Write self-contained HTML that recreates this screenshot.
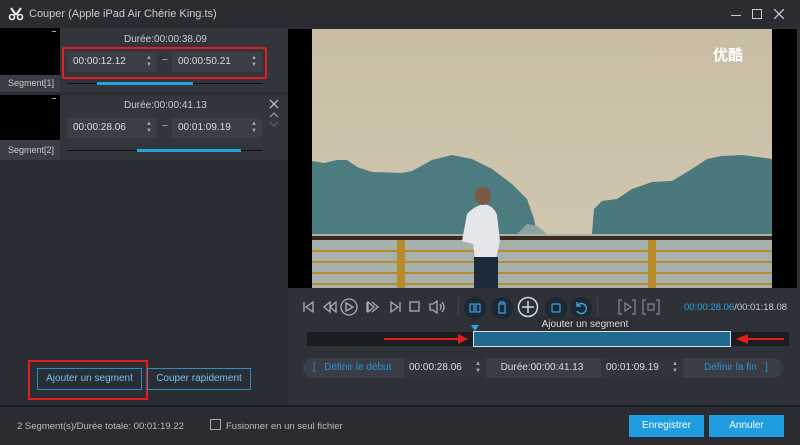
<!DOCTYPE html>
<html><head><meta charset="utf-8"><style>
*{margin:0;padding:0;box-sizing:border-box}
body{width:800px;height:445px;overflow:hidden;background:#2b2e34;font-family:"Liberation Sans","Noto Sans CJK SC",sans-serif;color:#ccc;font-size:10px;position:relative}
.a{position:absolute}
.tf{position:absolute;background:#3b3e45;height:20px;border-radius:2px;color:#ddd;font-size:10px;line-height:20px;padding-left:6px}
.sp{position:absolute;right:5px;top:3px;font-size:6px;line-height:7px;color:#aaa}
.cb{position:absolute;width:22px;height:22px;border-radius:50%;background:#1d2835}
</style></head><body>
<div class="a" style="left:0;top:0;width:800px;height:28px;background:#2a2c31"></div>
<svg class="a" style="left:8px;top:7px" width="16" height="14" viewBox="0 0 16 14"><path d="M3 1 L8 8 M13 1 L8 8" stroke="#eee" stroke-width="2"/><circle cx="4" cy="10" r="2.5" fill="none" stroke="#eee" stroke-width="1.6"/><circle cx="12" cy="10" r="2.5" fill="none" stroke="#eee" stroke-width="1.6"/></svg>
<div class="a" style="left:29px;top:8px;font-size:11px;color:#ccc">Couper (Apple iPad Air Chérie King.ts)</div>
<div class="a" style="left:731px;top:15px;width:10px;height:1px;background:#ccc"></div>
<div class="a" style="left:752px;top:9px;width:10px;height:10px;border:1px solid #ccc"></div>
<svg class="a" style="left:774px;top:9px" width="10" height="10"><path d="M0 0L10 10M10 0L0 10" stroke="#ccc" stroke-width="1.3"/></svg>
<div class="a" style="left:0;top:28px;width:288px;height:378px;background:#2a2d33"></div>
<div class="a" style="left:0;top:28px;width:60px;height:47px;background:#000"></div>
<div class="a" style="left:52px;top:31px;width:4px;height:1px;background:#aaa"></div>
<div class="a" style="left:0;top:75px;width:60px;height:17px;background:#3a3d44;color:#ccc;font-size:9px;line-height:17px;padding-left:8px">Segment[1]</div>
<div class="a" style="left:60px;top:28px;width:228px;height:64px;background:#32353c"></div>
<div class="a" style="left:124px;top:34px;color:#ccc">Durée:00:00:38.09</div>
<div class="tf" style="left:67px;top:52px;width:90px">00:00:12.12<span class="sp">▲<br>▼</span></div>
<div class="a" style="left:162px;top:55px;color:#ccc">−</div>
<div class="tf" style="left:172px;top:52px;width:90px">00:00:50.21<span class="sp">▲<br>▼</span></div>
<div class="a" style="left:62px;top:47px;width:205px;height:32px;border:2px solid #e0201c;border-radius:2px"></div>
<div class="a" style="left:67px;top:83px;width:195px;height:1px;background:#111"></div>
<div class="a" style="left:97px;top:82px;width:96px;height:3px;background:#22a6d8"></div>
<div class="a" style="left:0;top:95px;width:60px;height:45px;background:#000"></div>
<div class="a" style="left:52px;top:98px;width:4px;height:1px;background:#aaa"></div>
<div class="a" style="left:0;top:140px;width:60px;height:20px;background:#3a3d44;color:#ccc;font-size:9px;line-height:20px;padding-left:8px">Segment[2]</div>
<div class="a" style="left:60px;top:95px;width:228px;height:65px;background:#32353c"></div>
<div class="a" style="left:124px;top:100px;color:#ccc">Durée:00:00:41.13</div>
<div class="tf" style="left:67px;top:118px;width:90px">00:00:28.06<span class="sp">▲<br>▼</span></div>
<div class="a" style="left:162px;top:121px;color:#ccc">−</div>
<div class="tf" style="left:172px;top:118px;width:90px">00:01:09.19<span class="sp">▲<br>▼</span></div>
<svg class="a" style="left:269px;top:99px" width="10" height="30"><path d="M1 1L9 9M9 1L1 9" stroke="#ccc" stroke-width="1.2"/><path d="M1 18L5 14L9 18" stroke="#aaa" fill="none"/><path d="M1 23L5 27L9 23" stroke="#666" fill="none"/></svg>
<div class="a" style="left:67px;top:150px;width:195px;height:1px;background:#111"></div>
<div class="a" style="left:137px;top:149px;width:104px;height:3px;background:#22a6d8"></div>
<div class="a" style="left:37px;top:368px;width:105px;height:22px;border:1px solid #2a8fc2;color:#6cc4ee;line-height:20px;text-align:center">Ajouter un segment</div>
<div class="a" style="left:28px;top:360px;width:120px;height:40px;border:2px solid #e0201c"></div>
<div class="a" style="left:147px;top:368px;width:104px;height:22px;border:1px solid #2a8fc2;color:#6cc4ee;line-height:20px;text-align:center">Couper rapidement</div>
<div class="a" style="left:288px;top:28px;width:512px;height:378px;background:#2e3137"></div>
<div class="a" style="left:288px;top:29px;width:509px;height:259px;background:#000"></div>
<svg class="a" style="left:312px;top:29px" width="460" height="259" viewBox="0 0 460 259">
<defs><linearGradient id="s" x1="0" y1="0" x2="0" y2="1"><stop offset="0" stop-color="#c8bda4"/><stop offset="1" stop-color="#d2c8b2"/></linearGradient></defs>
<rect width="460" height="259" fill="url(#s)"/>
<path d="M0 132 L12 134 L25 131 L35 131 L45 138 L60 143 L90 144 L100 142 L120 131 L140 126 L160 130 L180 140 L200 155 L215 170 L222 190 L225 205 L0 205Z" fill="#4d7c80"/>
<path d="M205 205 L215 195 L225 197 L235 205Z" fill="#8ea3a0"/>
<path d="M280 205 L282 180 L290 172 L305 170 L320 160 L340 153 L360 152 L380 140 L395 130 L410 127 L430 126 L460 130 L460 205Z" fill="#4a787d"/>
<rect y="205" width="460" height="54" fill="#a6b0ad"/>
<rect y="207" width="460" height="4" fill="#3a2b1e"/>
<g fill="#b78a2a"><rect y="221" width="460" height="2"/><rect y="232" width="460" height="2"/><rect y="243" width="460" height="2"/><rect y="254" width="460" height="2"/><rect x="85" y="211" width="8" height="48"/><rect x="336" y="211" width="8" height="48"/></g>
<path d="M150 212 L155 185 Q162 177 172 175 Q182 177 185 186 L188 212 L184 230 L163 230 L161 215 Z" fill="#e4e6ea"/>
<ellipse cx="171" cy="167" rx="8" ry="9" fill="#7a5a42"/>
<rect x="162" y="228" width="24" height="31" fill="#1d2a3c"/>
<text x="401" y="31" fill="#fff" font-size="15" font-family="Noto Sans CJK SC,sans-serif" font-weight="bold">优酷</text>
</svg>
<svg class="a" style="left:300px;top:296px" width="160" height="22" viewBox="0 0 160 22" fill="none" stroke="#a8adb5" stroke-width="1.3">
<path d="M4 6V16M13 6L6 11L13 16Z"/>
<path d="M30 6L24 11L30 16ZM36 6L30 11L36 16Z"/>
<circle cx="49" cy="11" r="8"/><path d="M46 7L53 11L46 15Z"/>
<path d="M68 6L74 11L68 16ZM72 6L78 11L72 16"/><path d="M67 6V16"/>
<path d="M91 6L98 11L91 16ZM100 6V16"/>
<rect x="110" y="6" width="9" height="9"/>
<path d="M130 8H133L137 5V17L133 14H130Z"/><path d="M140 8Q142 11 140 14M142 6Q146 11 142 16"/>
</svg>
<div class="a" style="left:458px;top:297px;width:1px;height:20px;background:#444"></div>
<div class="cb" style="left:464px;top:297px"></div>
<svg class="a" style="left:464px;top:297px" width="22" height="22" fill="none" stroke="#3aa3dd" stroke-width="1.2"><rect x="6" y="7" width="4" height="8"/><rect x="12" y="7" width="4" height="8"/></svg>
<div class="cb" style="left:491px;top:297px"></div>
<svg class="a" style="left:491px;top:297px" width="22" height="22" fill="none" stroke="#3aa3dd" stroke-width="1.2"><path d="M7 7H15M9 7V5H13V7M8 8V16H14V8"/></svg>
<svg class="a" style="left:517px;top:296px" width="22" height="22" fill="none" stroke="#cde" stroke-width="1.5"><circle cx="11" cy="11" r="9.5"/><path d="M11 5V17M5 11H17"/></svg>
<div class="cb" style="left:545px;top:297px"></div>
<svg class="a" style="left:545px;top:297px" width="22" height="22" fill="none" stroke="#3aa3dd" stroke-width="1.2"><rect x="7" y="7" width="8" height="8" rx="1"/></svg>
<div class="cb" style="left:570px;top:297px"></div>
<svg class="a" style="left:570px;top:297px" width="22" height="22" fill="none" stroke="#3aa3dd" stroke-width="1.4"><path d="M7 9A5 5 0 1 1 7 14M7 5V9H11"/></svg>
<div class="a" style="left:597px;top:297px;width:1px;height:20px;background:#444"></div>
<svg class="a" style="left:618px;top:298px" width="44" height="18" fill="none" stroke="#888" stroke-width="1.2"><path d="M4 2H1V16H4M14 2H17V16H14M7 5L13 9L7 13Z"/><path d="M28 2H25V16H28M38 2H41V16H38"/><rect x="30" y="6" width="6" height="6"/></svg>
<div class="a" style="left:684px;top:302px;font-size:9.5px;color:#ccc"><span style="color:#2ba4e0">00:00:28.06</span>/00:01:18.08</div>
<div class="a" style="left:538px;top:317px;width:94px;height:15px;background:#2a2c31;color:#ddd;font-size:10px;line-height:15px;text-align:center">Ajouter un segment</div>
<div class="a" style="left:471px;top:325px;width:0;height:0;border-left:4px solid transparent;border-right:4px solid transparent;border-top:6px solid #2ba4e0"></div>
<div class="a" style="left:307px;top:332px;width:482px;height:14px;background:#1b1c20"></div>
<div class="a" style="left:473px;top:331px;width:258px;height:16px;background:#1f6a8e;border:1.5px solid #ddd"></div>
<div class="a" style="left:384px;top:338px;width:76px;height:2px;background:#e0201c"></div>
<div class="a" style="left:458px;top:334px;border-left:10px solid #e0201c;border-top:5px solid transparent;border-bottom:5px solid transparent"></div>
<div class="a" style="left:746px;top:338px;width:38px;height:2px;background:#e0201c"></div>
<div class="a" style="left:736px;top:334px;border-right:12px solid #e0201c;border-top:5px solid transparent;border-bottom:5px solid transparent"></div>
<div class="a" style="left:303px;top:358px;width:480px;height:20px;border-radius:10px;background:#3a3d45"></div>
<div class="a" style="left:313px;top:362px;color:#2a93d5">[ &nbsp; Définir le début</div>
<div class="a" style="left:404px;top:358px;width:82px;height:20px;background:#31343b;padding-left:5px;line-height:20px;color:#ddd">00:00:28.06<span class="a" style="right:5px;top:3px;font-size:6px;line-height:7px;color:#aaa">▲<br>▼</span></div>
<div class="a" style="left:486px;top:358px;width:112px;height:20px;line-height:20px;text-align:center;color:#ddd">Durée:00:00:41.13</div>
<div class="a" style="left:601px;top:358px;width:82px;height:20px;background:#31343b;padding-left:5px;line-height:20px;color:#ddd">00:01:09.19<span class="a" style="right:5px;top:3px;font-size:6px;line-height:7px;color:#aaa">▲<br>▼</span></div>
<div class="a" style="left:704px;top:362px;color:#2a93d5">Définir la fin &nbsp; ]</div>
<div class="a" style="left:0;top:405px;width:800px;height:2px;background:#1c1d21"></div>
<div class="a" style="left:0;top:407px;width:800px;height:38px;background:#2a2c31"></div>
<div class="a" style="left:17px;top:421px;color:#bbb;font-size:9.5px">2 Segment(s)/Durée totale: 00:01:19.22</div>
<div class="a" style="left:210px;top:419px;width:11px;height:11px;border:1px solid #aaa"></div>
<div class="a" style="left:226px;top:421px;color:#bbb;font-size:9.5px">Fusionner en un seul fichier</div>
<div class="a" style="left:629px;top:415px;width:75px;height:22px;background:#1e9de0;color:#fff;text-align:center;line-height:22px">Enregistrer</div>
<div class="a" style="left:709px;top:415px;width:75px;height:22px;background:#1e9de0;color:#fff;text-align:center;line-height:22px">Annuler</div>
</body></html>
